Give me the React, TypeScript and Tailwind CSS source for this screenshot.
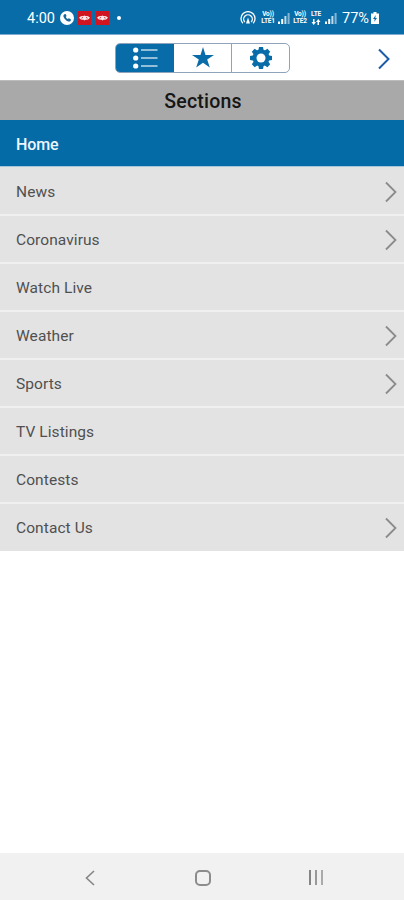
import React from "react";

const items = [
  { label: "News", more: true },
  { label: "Coronavirus", more: true },
  { label: "Watch Live", more: false },
  { label: "Weather", more: true },
  { label: "Sports", more: true },
  { label: "TV Listings", more: false },
  { label: "Contests", more: false },
  { label: "Contact Us", more: true },
];

function Chevron({ className, width = 1.5 }: { className: string; width?: number }) {
  return (
    <svg className={className} width="14" height="22" viewBox="0 0 14 22" fill="none" stroke="currentColor" strokeWidth={width}>
      <path d="M2 1.5 11.5 11 2 20.5" />
    </svg>
  );
}

function EyeBadge() {
  return (
    <svg width="13" height="14" viewBox="0 0 13 14">
      <rect width="13" height="14" fill="#d01420" />
      <path d="M1 6.8C2.5 5.2 3.5 4.5 5 5.2L6.5 4.5 8 5.2C9.5 4.5 10.5 5.2 12 6.8 10.5 8.5 9.5 9 8 8.5L6.5 9.5 5 8.5C3.5 9 2.5 8.5 1 6.8Z" fill="#fbe9ea" />
      <path d="M3.5 7.2 5 6.4M8 6.4l1.5.8" stroke="#d01420" strokeWidth="0.9" />
    </svg>
  );
}

function Signal() {
  return (
    <svg width="12" height="11" viewBox="0 0 12 11" fill="#fff">
      <rect x="0" y="8.5" width="2" height="2.5" />
      <rect x="3.2" y="6" width="2" height="5" />
      <rect x="6.4" y="3" width="2" height="8" opacity=".75" />
      <rect x="9.6" y="0" width="2" height="11" opacity=".5" />
    </svg>
  );
}

function NetLabel({ top, bottom }: { top: string; bottom?: string }) {
  return (
    <div className="flex h-[14px] w-[14px] flex-col items-center justify-between text-[6.5px] leading-[7px] font-bold tracking-[-0.2px]">
      <span>{top}</span>
      {bottom ? (
        <span>{bottom}</span>
      ) : (
        <svg width="10" height="6" viewBox="0 0 10 6" fill="#fff">
          <path d="M2 0h1.5v3H5L2.7 6 .5 3H2ZM6.5 6H8V3h1.5L7.3 0 5 3h1.5Z" />
        </svg>
      )}
    </div>
  );
}

function StatusBar() {
  return (
    <div className="flex h-[35px] shrink-0 items-center border-b border-[#82abd0] bg-[#086ca8] pt-[2px] pr-[25px] pl-[27px] text-[14.5px] text-white">
      <span className="w-[33px] pt-[2px]">4:00</span>
      <svg width="14" height="14" viewBox="0 0 14 14">
        <circle cx="7" cy="7" r="7" fill="#fff" />
        <path d="M4.3 3.2 5.6 3l1 2.1-.8.9c.4.9 1.1 1.6 2.1 2.1l.9-.9 2.1 1-.2 1.5c-.5.9-1.5 1.1-2.5.7C5.9 9.5 4.3 7.9 3.5 5.7c-.3-1 .1-2 .8-2.5Z" fill="#17699d" />
      </svg>
      <div className="ml-1 flex gap-[5px]">
        <EyeBadge />
        <EyeBadge />
      </div>
      <span className="ml-[8px] size-1 rounded-full bg-white" />
      <div className="ml-auto flex items-center">
        <svg width="16" height="14" viewBox="0 0 16 14" fill="none" stroke="#fff" strokeWidth="1.3">
          <path d="M2.8 12.3A7 7 0 1 1 13.2 12.3M4.8 11A4.3 4.3 0 1 1 11.2 11" />
          <path d="M8 6.5 10 12.5H6Z" fill="#fff" stroke="none" />
        </svg>
        <div className="ml-[5px] flex items-center gap-[3px]">
          <NetLabel top="Vo))" bottom="LTE1" />
          <Signal />
        </div>
        <div className="ml-[3px] flex items-center gap-[2px]">
          <NetLabel top="Vo))" bottom="LTE2" />
          <NetLabel top="LTE" />
          <Signal />
        </div>
        <span className="ml-[5px] w-[27px] pt-[2px] whitespace-nowrap">77%</span>
        <svg className="ml-[2px]" width="8" height="12" viewBox="0 0 8 12">
          <path d="M2.5 0h3v1.5H8V12H0V1.5h2.5Z" fill="#fff" />
          <path d="M4.8 3 2 7h1.7l-.5 3L6 6H4.3Z" fill="#086ca8" />
        </svg>
      </div>
    </div>
  );
}

function Toolbar() {
  return (
    <div className="flex h-[45px] shrink-0 items-center justify-between bg-white pr-[13px] pl-[115px]">
      <div className="flex h-[30px] w-[175px] overflow-hidden rounded-[5px] border border-[#8fa3bd]">
        <div className="flex w-[58px] items-center justify-center bg-[#086ca8]">
          <svg width="25" height="22" viewBox="0 0 25 22" fill="#fff">
            <circle cx="2.7" cy="3" r="2.6" />
            <circle cx="2.7" cy="11" r="2.6" />
            <circle cx="2.7" cy="19" r="2.6" />
            <path d="M8 2.3h16.5v1.5H8ZM8 10.3h16.5v1.5H8ZM8 18.3h16.5v1.5H8Z" opacity=".75" />
          </svg>
        </div>
        <div className="flex w-[58px] items-center justify-center border-r border-[#8fa3bd]">
          <svg width="22" height="21" viewBox="0 0 22 21" fill="#086ca8">
            <path d="M11 0 13.5 7.9H22L15.2 12.6 17.8 20.6 11 15.7 4.2 20.6 6.8 12.6 0 7.9H8.5Z" />
          </svg>
        </div>
        <div className="flex flex-1 items-center justify-center">
          <svg width="22" height="22" viewBox="-11 -11 22 22">
            <g fill="#086ca8">
              {[0, 45, 90, 135].map((a) => (
                <path key={a} d="M-2-11H2L2.8-7V7L2 11H-2L-2.8 7V-7Z" transform={`rotate(${a})`} />
              ))}
              <circle r="8.4" />
            </g>
            <circle r="4.5" fill="#fff" />
          </svg>
        </div>
      </div>
      <Chevron className="mt-[3px] text-[#1c5ba5]" width={2} />
    </div>
  );
}

export default function App() {
  return (
    <div className="flex h-[900px] w-[404px] flex-col overflow-hidden bg-white font-[Roboto,sans-serif]">
      <StatusBar />
      <Toolbar />
      <h1 className="flex h-[40px] shrink-0 items-center justify-center border-t border-[#bcbcbc] bg-[#a9a9a9] pt-[2px] pl-[2px] text-[19.5px] font-medium tracking-[0.2px] text-[#161616]">
        Sections
      </h1>
      <ul className="flex flex-col">
        <li className="flex h-[47px] items-center border-b border-[#a5c5d9] bg-[#056ba7] pt-[3px] pl-4 text-[16px] font-medium tracking-[-0.1px] text-[#edf6ff]">
          Home
        </li>
        {items.map((item) => (
          <li
            key={item.label}
            className="flex h-[48px] items-center justify-between border-b-2 border-[#f0f0f0] bg-[#e3e3e3] pt-[3px] pr-[6px] pl-4 text-[15.5px] text-[#505050] nth-2:h-[49px] nth-2:pt-[4px] last:h-[47px] last:border-b-0"
          >
            <span className="tracking-[0.08px]">{item.label}</span>
            {item.more && <Chevron className="-mt-[2px] text-[#8b8b8b]" width={1.8} />}
          </li>
        ))}
      </ul>
      <nav className="mt-auto flex h-[47px] shrink-0 items-center bg-[#f1f1f1] pt-[2px] pl-[85px] text-[#858585]">
        <svg width="10" height="16" viewBox="0 0 10 16" fill="none" stroke="currentColor" strokeWidth="1.6">
          <path d="M9 1 1.5 8 9 15" />
        </svg>
        <span className="ml-[100px] size-[16px] rounded-[5px] border-2 border-[#8c8c8c]" />
        <div className="ml-[98px] flex h-[15px] gap-[4px]">
          <span className="w-[2px] bg-[#858585]" />
          <span className="w-[2px] bg-[#999999]" />
          <span className="w-[2px] bg-[#aaaaaa]" />
        </div>
      </nav>
    </div>
  );
}
